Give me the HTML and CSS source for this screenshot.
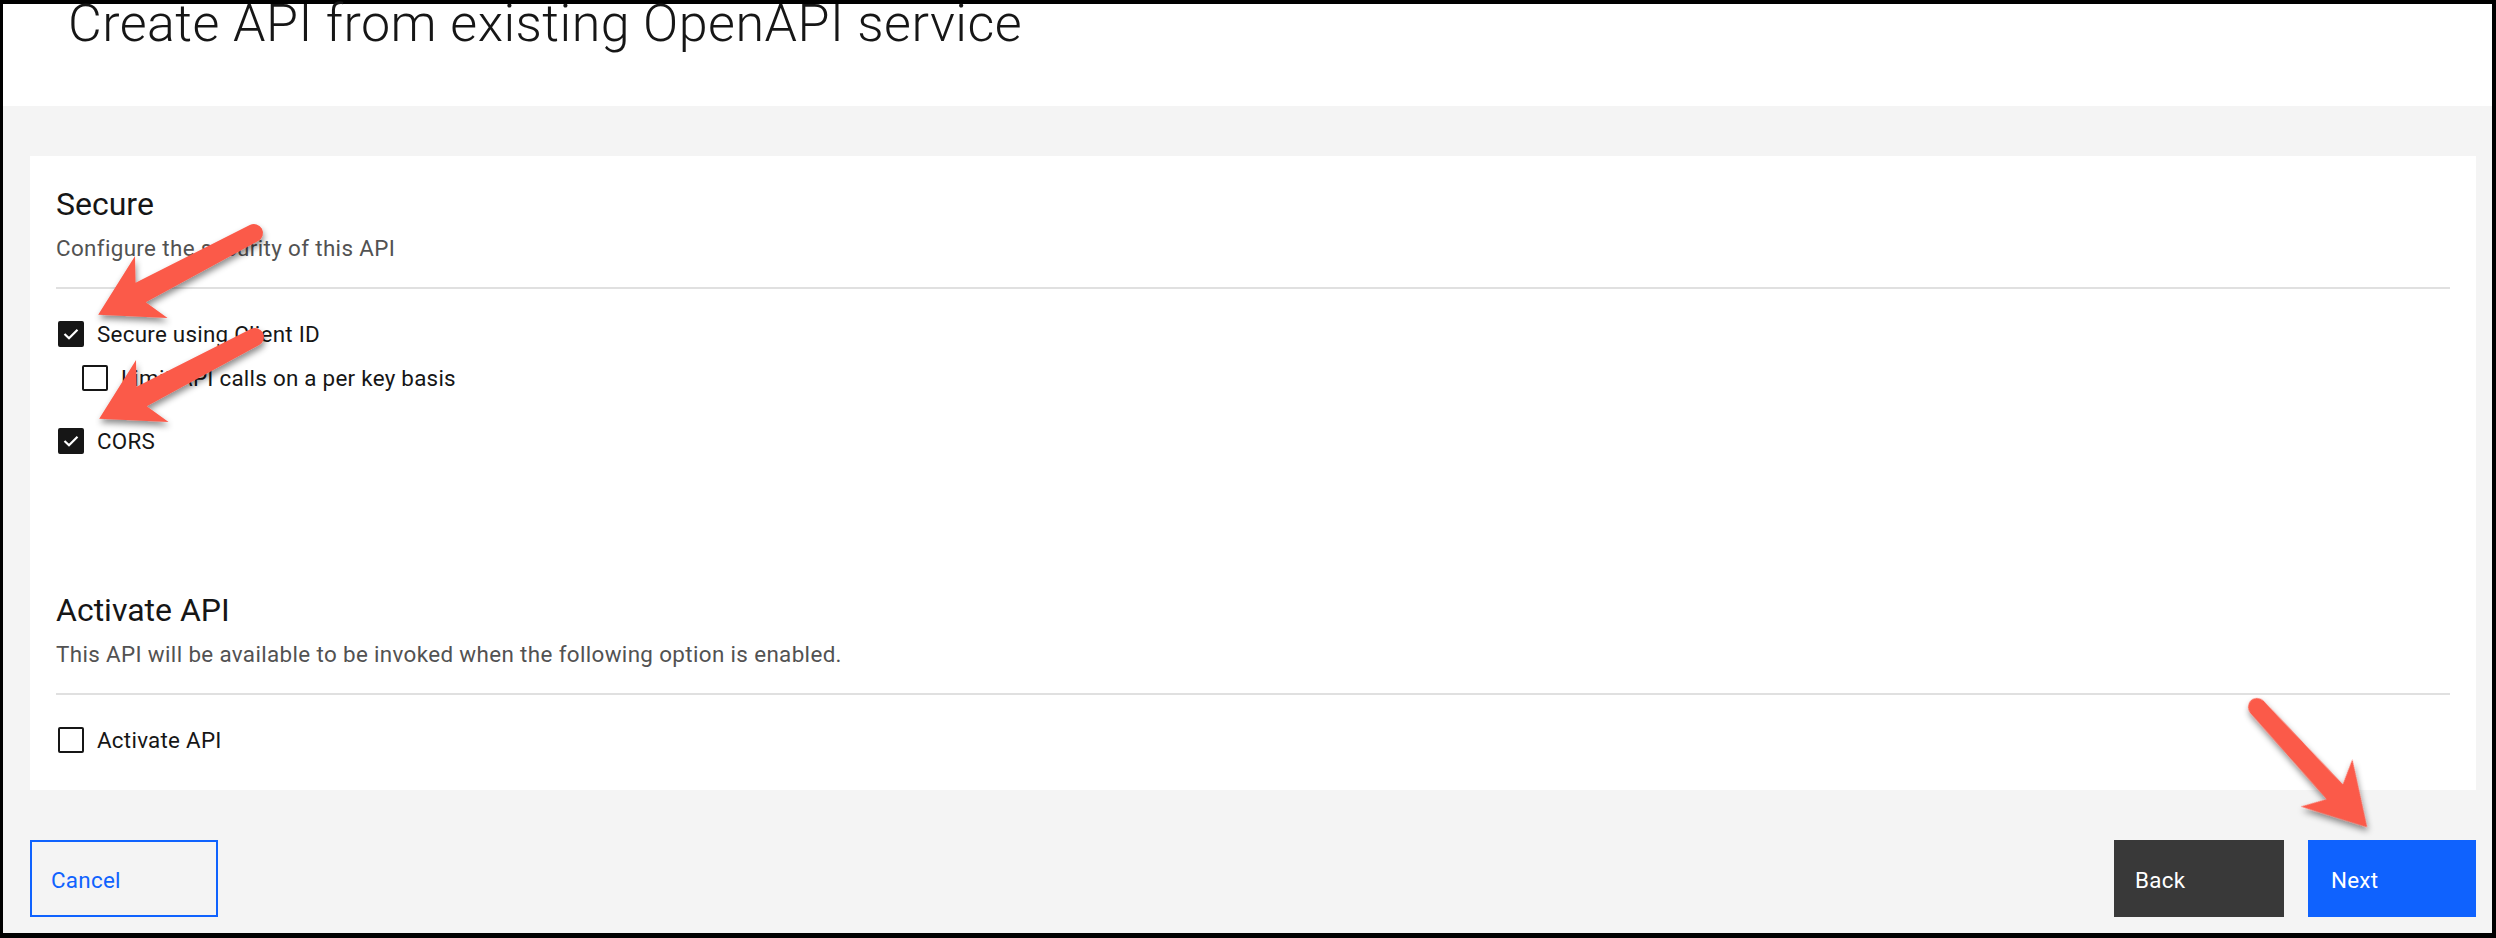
FILE: index.html
```html
<!DOCTYPE html>
<html lang="en">
<head>
<meta charset="utf-8">
<title>Create API from existing OpenAPI service</title>
<link rel="stylesheet" href="styles.css">
</head>
<body>
<div class="frame">
  <header class="page-header">
    <h1 class="title">Create API from existing OpenAPI service</h1>
  </header>
  <main class="content">
    <section class="card">
      <div class="section">
        <h2 class="section-title">Secure</h2>
        <p class="section-desc">Configure the security of this API</p>
        <hr class="divider">
        <div class="options">
          <label class="checkbox-row">
            <span class="checkbox checked"><svg viewBox="0 0 22 22" width="22" height="22"><polyline points="4.5,11 9,15.3 17.5,6.8" fill="none" stroke="#fff" stroke-width="2.2"/></svg></span>
            <span class="label">Secure using Client ID</span>
          </label>
          <label class="checkbox-row nested">
            <span class="checkbox"></span>
            <span class="label">Limit API calls on a per key basis</span>
          </label>
          <label class="checkbox-row spaced">
            <span class="checkbox checked"><svg viewBox="0 0 22 22" width="22" height="22"><polyline points="4.5,11 9,15.3 17.5,6.8" fill="none" stroke="#fff" stroke-width="2.2"/></svg></span>
            <span class="label">CORS</span>
          </label>
        </div>
      </div>
      <div class="section section-activate">
        <h2 class="section-title">Activate API</h2>
        <p class="section-desc">This API will be available to be invoked when the following option is enabled.</p>
        <hr class="divider">
        <div class="options">
          <label class="checkbox-row">
            <span class="checkbox"></span>
            <span class="label">Activate API</span>
          </label>
        </div>
      </div>
    </section>
    <footer class="actions">
      <button class="btn btn-tertiary">Cancel</button>
      <div class="actions-right">
        <button class="btn btn-secondary">Back</button>
        <button class="btn btn-primary">Next</button>
      </div>
    </footer>
  </main>
</div>
<svg class="annotations" width="2496" height="938" viewBox="0 0 2496 938">
  <defs>
    <filter id="sh" x="-30%" y="-30%" width="160%" height="160%">
      <feDropShadow dx="1" dy="4" stdDeviation="3" flood-color="#000" flood-opacity="0.45"/>
    </filter>
  </defs>
  <g filter="url(#sh)" fill="#fb5a4a">
    <path transform="translate(254 233) rotate(152.3)" d="M0,-9 L128,-11 L116,-35 L176,0 L116,35 L128,11 L0,9 A9,9 0 0 1 0,-9 Z"/>
    <path transform="translate(255 337) rotate(152.3)" d="M0,-9 L128,-11 L116,-35 L176,0 L116,35 L128,11 L0,9 A9,9 0 0 1 0,-9 Z"/>
    <path transform="translate(2257 707) rotate(47.5)" d="M0,-9 L115,-11 L103,-35 L163,0 L103,35 L115,11 L0,9 A9,9 0 0 1 0,-9 Z"/>
  </g>
</svg>
</body>
</html>
```
FILE: styles.css
```css
html, body {
  margin: 0;
  padding: 0;
}

body {
  position: relative;
  width: 2496px;
  height: 938px;
  overflow: hidden;
  font-family: Roboto, "Noto Sans", sans-serif;
  color: #161616;
  background: #000;
}

.frame {
  box-sizing: border-box;
  width: 2496px;
  height: 938px;
  border-style: solid;
  border-color: #000;
  border-width: 4px 4px 5px 3px;
  display: flex;
  flex-direction: column;
  background: #f4f4f4;
}

.page-header {
  flex: none;
  box-sizing: border-box;
  height: 102px;
  background: #fff;
  padding: 1px 0 0 65px;
}

.title {
  margin: 0;
  font-size: 52px;
  font-weight: 300;
  line-height: 38px;
  letter-spacing: 0.45px;
  color: #161616;
  white-space: nowrap;
}

.content {
  flex: 1;
  display: flex;
  flex-direction: column;
  padding: 50px 16px 16px 27px;
}

.card {
  box-sizing: border-box;
  height: 634px;
  background: #fff;
  padding: 28px 26px 30px 26px;
}

.section-title {
  margin: 0;
  font-size: 32px;
  font-weight: 400;
  line-height: 40px;
  color: #161616;
}

.section-desc {
  margin: 8px 0 0;
  font-size: 22.4px;
  line-height: 32px;
  color: #525252;
  letter-spacing: 0.36px;
}

.divider {
  margin: 23px 0 0;
  border: 0;
  height: 2px;
  background: #e0e0e0;
}

.options {
  margin-top: 25px;
  display: flex;
  flex-direction: column;
}

.checkbox-row {
  display: flex;
  align-items: center;
  gap: 13px;
  height: 40px;
  font-size: 22.4px;
  letter-spacing: 0.26px;
  color: #161616;
}

.checkbox {
  box-sizing: border-box;
  flex: none;
  width: 26px;
  height: 26px;
  margin-left: 2px;
  border: 2px solid #161616;
  border-radius: 2px;
  display: flex;
  align-items: center;
  justify-content: center;
}

.checkbox.checked {
  background: #161616;
}

.checkbox svg {
  display: block;
}

.nested {
  margin-top: 4px;
  padding-left: 24px;
}

.spaced {
  margin-top: 23px;
}

.section-activate {
  margin-top: 129px;
}

.actions {
  margin-top: 50px;
  display: flex;
  justify-content: space-between;
  align-items: flex-start;
}

.actions-right {
  display: flex;
  gap: 24px;
}

.btn {
  box-sizing: border-box;
  height: 77px;
  margin: 0;
  border: 0;
  padding: 3px 0 0 22px;
  display: flex;
  align-items: center;
  font-family: Roboto, "Noto Sans", sans-serif;
  font-size: 22.4px;
  font-weight: 400;
  letter-spacing: 0.26px;
  text-align: left;
  cursor: pointer;
}

.btn-tertiary {
  width: 188px;
  border: 2px solid #0f62fe;
  background: transparent;
  color: #0f62fe;
  padding-left: 19px;
}

.btn-secondary {
  width: 170px;
  background: #393939;
  color: #fff;
  padding-left: 21px;
}

.btn-primary {
  width: 168px;
  background: #0f62fe;
  color: #fff;
  padding-left: 23px;
}

.annotations {
  position: absolute;
  top: 0;
  left: 0;
  pointer-events: none;
}
```
